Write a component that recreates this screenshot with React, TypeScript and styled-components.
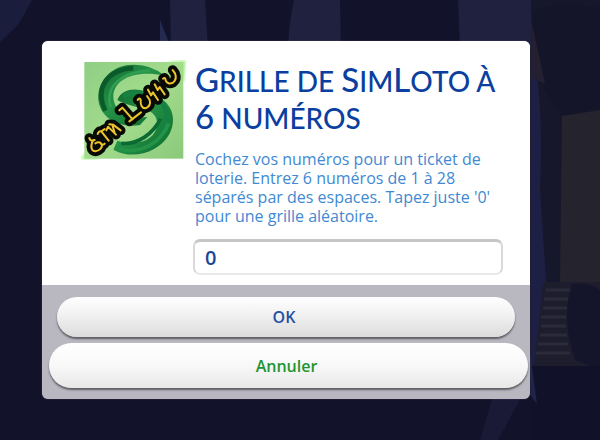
import React from "react";
import styled, { createGlobalStyle } from "styled-components";

const GlobalStyle = createGlobalStyle`
  *, *::before, *::after { box-sizing: border-box; }
  body { margin: 0; background: #12132b; }
`;

const Page = styled.main`
  position: relative;
  min-height: 100vh;
  padding: 41px 70px 41px 42px;
  overflow: hidden;
  font-family: "Open Sans", "Noto Sans", sans-serif;
`;

const Backdrop = styled.svg`
  position: absolute;
  inset: 0;
  width: 100%;
  height: 100%;
`;

const Dialog = styled.form`
  position: relative;
  margin: 0;
  border-radius: 6px;
  overflow: hidden;
  background: #b9b8c0;
  box-shadow: 0 0 1px #8c8ca0;
`;

const Content = styled.div`
  display: grid;
  grid-template-columns: 106px 1fr;
  column-gap: 7px;
  padding: 19px 27px 10px 38px;
  background: #fff;
`;

const Logo = styled.svg`
  width: 106px;
  height: 100px;
`;

const Details = styled.div`
  display: flex;
  flex-direction: column;
`;

const Title = styled.h1`
  margin: 3px 0 0;
  padding-left: 2px;
  font-family: Lato, sans-serif;
  font-size: 28px;
  font-weight: 500;
  line-height: 37px;
  color: #0b3f9f;
  text-transform: uppercase;
  white-space: nowrap;
`;

const Initial = styled.span`
  font-size: 33px;
  line-height: 1;
`;

const Message = styled.label`
  margin: 13px 0;
  padding-left: 2px;
  font-size: 16px;
  line-height: 19px;
  color: #4189d2;
  white-space: nowrap;
`;

const NumberField = styled.input`
  width: 100%;
  height: 36px;
  padding: 0 10px;
  border: 2px solid #d9d9dc;
  border-top: 3px solid #c6c6c8;
  border-bottom-color: #e9e9eb;
  border-radius: 7px;
  background: #fff;
  color: #1c4697;
  font: 600 20px "Open Sans", sans-serif;
  outline: none;
`;

const Actions = styled.div`
  display: flex;
  flex-direction: column;
  gap: 6px;
  padding: 12px 2px 11px 7px;
`;

const PillButton = styled.button<{ $main?: boolean }>`
  height: ${(p) => (p.$main ? 40 : 45)}px;
  margin: ${(p) => (p.$main ? "0 13px 0 8px" : "0")};
  padding: 0 4px 0 0;
  border: 0;
  border-radius: 23px;
  background: ${(p) =>
    p.$main
      ? "linear-gradient(#fefefe, #f3f3f3 40%, #dcdcdc)"
      : "linear-gradient(#ffffff, #f8f8f8 50%, #e8e8e8)"};
  box-shadow: 0 2px 2px #5c5c62;
  color: ${(p) => (p.$main ? "#2450a4" : "#1e9432")};
  font: 600 16px "Open Sans", sans-serif;
`;

function Scene() {
  return (
    <Backdrop viewBox="0 0 600 440" preserveAspectRatio="none" aria-hidden="true">
      <path d="M0 0H32L18 25L0 42Z" fill="#1a1d3b" />
      <path d="M160 20L171 48H160Z" fill="#252a51" />
      <path d="M170 0H205L208 48H171Z" fill="#1f213e" />
      <path d="M294 0H340L341 48H288Q289 22 294 0Z" fill="#1f213e" />
      <path d="M458 0H531V48H460Z" fill="#1f213f" />
      <path d="M531 0H600V440H531Z" fill="#16172a" />
      <path d="M531 40Q544 95 540 190L546 280L536 360L531 370Z" fill="#1d2044" />
      <path d="M533 12Q550 0 600 8V112L560 116Q540 85 533 60Z" fill="#141529" />
      <path d="M531 20L540 60L545 84L532 78Z" fill="#242031" />
      <path d="M562 116L600 110V282H560Z" fill="#25232e" />
      <path d="M543 282H600V368H534Z" fill="#1e1d2d" />
      <path d="M546 290H570M544 299H568M543 308H567M541 317H566M541 326H566M540 335H567M538 344H568M536 353H570" stroke="#2b2a38" strokeWidth="3" />
      <path d="M572 284Q590 282 600 290V370L575 360Q561 320 572 284Z" fill="#14152b" />
      <path d="M531 366H600V440H531Z" fill="#111229" />
      <path d="M492 399H520L498 440H480Z" fill="#1a1a36" />
      <path d="M530 352L537 404L531 396Z" fill="#20234a" />
    </Backdrop>
  );
}

const runes = [
  "M58 264Q60 275 74 270M68 273Q60 292 68 301Q80 308 92 296Q99 286 93 280Q86 274 76 280M93 282Q98 286 104 281",
  "M83 252Q86 242 94 244L116 272M94 244L104 237",
  "M109 241L114 230L138 254M118 223L129 224M127 224L134 249M129 224L152 241",
  "M148 181L157 173L188 208M178 214L213 187",
  "M203 150Q208 142 212 149Q210 174 226 175Q244 168 239 150L231 138",
  "M234 119L243 136L249 127L264 150",
  "M254 103L263 120L269 111L284 133",
  "M279 86Q286 80 287 91Q293 105 309 98Q322 87 315 70L308 60",
];

function SimLotoLogo() {
  return (
    <Logo viewBox="30 30 318 300" role="img" aria-label="SimLoto">
      <defs>
        <linearGradient id="tile" x1="0" y1="0" x2="1" y2="1">
          <stop offset="0" stopColor="#8fcf85" />
          <stop offset="0.5" stopColor="#a3dc8c" />
          <stop offset="1" stopColor="#8bc97b" />
        </linearGradient>
        <linearGradient id="ring" x1="0" y1="0" x2="1" y2="1">
          <stop offset="0" stopColor="#12692f" />
          <stop offset="0.45" stopColor="#259247" />
          <stop offset="1" stopColor="#0c6a2d" />
        </linearGradient>
        <filter id="glow" x="-20%" y="-20%" width="140%" height="140%">
          <feGaussianBlur stdDeviation="5" />
        </filter>
      </defs>
      <path d="M45 315L85 325L38 325ZM300 38L345 34L340 90Z" fill="#a4f58c" stroke="#a4f58c" strokeWidth="6" filter="url(#glow)" />
      <rect x="43" y="36" width="297" height="290" fill="url(#tile)" />
      <path d="M282 76Q238 38 174 45C112 54 78 106 86 155C94 206 151 235 210 225L232 201C182 208 132 188 130 141C129 92 185 58 282 76Z" fill="url(#ring)" />
      <path d="M142 150C158 108 215 112 258 137C310 160 322 212 296 256C262 311 186 330 130 299L142 272C191 290 244 274 258 239C270 204 250 181 210 173Q164 164 142 150Z" fill="url(#ring)" />
      <path d="M106 182C72 110 115 60 190 54" fill="none" stroke="#0b5a2a" strokeWidth="14" />
      <path d="M122 172C104 108 155 66 240 62" fill="none" stroke="#2f9e51" strokeWidth="8" />
      <path d="M160 138C195 118 255 135 278 162C300 190 290 222 268 244" fill="none" stroke="#158243" strokeWidth="14" />
      <path d="M154 280C205 285 250 250 272 206" fill="none" stroke="#0b6a32" strokeWidth="11" />
      <path d="M146 297C215 315 275 275 296 220" fill="none" stroke="#239348" strokeWidth="11" />
      <g fill="none" strokeLinecap="round" strokeLinejoin="round">
        {runes.map((d) => (
          <path key={d} d={d} stroke="#080a05" strokeWidth="29" />
        ))}
        {runes.map((d) => (
          <path key={d} d={d} stroke="#edc42d" strokeWidth="6" />
        ))}
      </g>
    </Logo>
  );
}

export default function App() {
  return (
    <>
      <GlobalStyle />
      <Page>
        <Scene />
        <Dialog onSubmit={(e) => e.preventDefault()}>
          <Content>
            <SimLotoLogo />
            <Details>
              <Title>
                <Initial>G</Initial>rille de <Initial>S</Initial>im<Initial>L</Initial>oto à
                <br />
                <Initial>6</Initial> numéros
              </Title>
              <Message htmlFor="numbers">
                Cochez vos numéros pour un ticket de
                <br />
                loterie. Entrez 6 numéros de 1 à 28
                <br />
                séparés par des espaces. Tapez juste '0'
                <br />
                pour une grille aléatoire.
              </Message>
              <NumberField id="numbers" type="text" defaultValue="0" />
            </Details>
          </Content>
          <Actions>
            <PillButton $main type="submit">OK</PillButton>
            <PillButton type="button">Annuler</PillButton>
          </Actions>
        </Dialog>
      </Page>
    </>
  );
}
